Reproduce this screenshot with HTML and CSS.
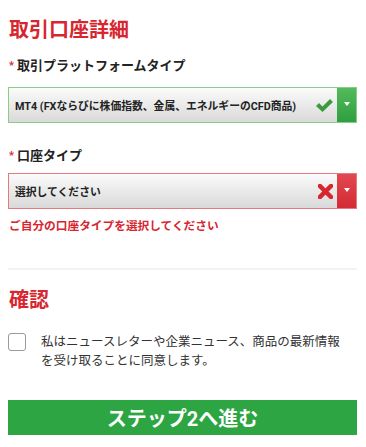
FILE: index.html
```html
<!DOCTYPE html>
<html lang="ja">
<head>
  <meta charset="UTF-8" />
  <meta name="viewport" content="width=device-width, initial-scale=1.0" />
  <title>取引口座詳細</title>
  <link rel="stylesheet" href="styles.css">
</head>
<body>
  <form class="form">
    <h2 class="section-title">取引口座詳細</h2>

    <div class="field">
      <label class="field-label"><span class="req">*</span>取引プラットフォームタイプ</label>
      <div class="select valid">
        <span class="select-value">MT4 (FXならびに株価指数、金属、エネルギーのCFD商品)</span>
        <span class="status">
          <svg width="18" height="16" viewBox="0 0 18 16"><path d="M1 9 L4 6 L7.5 9.5 L15 2 L18 5 L7.5 15 Z" fill="#3c9b3e"/></svg>
        </span>
        <span class="arrow"></span>
      </div>
    </div>

    <div class="field field-second">
      <label class="field-label"><span class="req">*</span>口座タイプ</label>
      <div class="select invalid">
        <span class="select-value">選択してください</span>
        <span class="status">
          <svg width="15" height="15" viewBox="0 0 15 15"><path d="M2 2 L13 13 M13 2 L2 13" stroke="#d9262e" stroke-width="4.5" stroke-linecap="square"/></svg>
        </span>
        <span class="arrow"></span>
      </div>
      <p class="error">ご自分の口座タイプを選択してください</p>
    </div>

    <hr class="divider">

    <h2 class="section-title">確認</h2>

    <label class="consent">
      <span class="checkbox"></span>
      <span class="consent-text">私はニュースレターや企業ニュース、商品の最新情報を受け取ることに同意します。</span>
    </label>

    <button type="button" class="next-btn">ステップ2へ進む</button>
  </form>
</body>
</html>
```

FILE: styles.css
```css
* {
  box-sizing: border-box;
}
body {
  margin: 0;
  padding: 0 9px 0 8px;
  font-family: Roboto, "Noto Sans CJK JP", sans-serif;
  background: #fff;
  color: #222;
}
.form {
  display: flex;
  flex-direction: column;
}
.section-title {
  margin: 18px 0 0 1px;
  font-size: 20px;
  line-height: 24px;
  font-weight: bold;
  color: #d7262f;
}
.field {
  margin-top: 15px;
}
.field-second {
  margin-top: 24px;
}
.field-label {
  display: block;
  font-size: 13px;
  line-height: 18px;
  font-weight: bold;
  color: #222;
  margin-left: 1px;
}
.req {
  color: #d7262f;
  font-size: 11px;
  margin-right: 3px;
  vertical-align: top;
}
.select {
  display: flex;
  align-items: stretch;
  height: 36px;
  margin-top: 12px;
  border: 1px solid #8acb8c;
  background: linear-gradient(#fbfbfb, #d9d9d9);
}
.select.invalid {
  border-color: #e27a80;
  margin-top: 8px;
}
.select-value {
  flex: 1;
  display: flex;
  align-items: center;
  padding-left: 6px;
  font-size: 10.8px;
  font-weight: bold;
  color: #222;
  white-space: nowrap;
}
.status {
  display: flex;
  align-items: center;
  padding-right: 4px;
}
.arrow {
  width: 19px;
  position: relative;
  background: linear-gradient(#52bb5c, #2f9f3e);
}
.invalid .arrow {
  background: linear-gradient(#e24850, #d42a33);
}
.arrow::after {
  content: "";
  position: absolute;
  top: 14px;
  left: 7px;
  border-left: 3px solid transparent;
  border-right: 3px solid transparent;
  border-top: 4px solid #fff;
}
.error {
  margin: 9px 0 0 1px;
  font-size: 11.7px;
  line-height: 17px;
  font-weight: bold;
  color: #d7262f;
}
.divider {
  margin: 33px 0 0;
  border: 0;
  height: 2px;
  background: #f3f3f3;
}
.divider + .section-title {
  margin-top: 18px;
}
.consent {
  display: flex;
  align-items: flex-start;
  margin-top: 20px;
  padding-right: 14px;
}
.checkbox {
  flex: none;
  width: 18px;
  height: 18px;
  margin-top: 1px;
  border: 1px solid #9a9a9a;
  border-radius: 3px;
  background: #fff;
}
.consent-text {
  margin-left: 15px;
  font-size: 12.5px;
  line-height: 19px;
  color: #333;
}
.next-btn {
  margin-top: 30px;
  height: 35px;
  border: 0;
  background: #2da543;
  color: #fff;
  font-family: inherit;
  font-size: 20px;
  font-weight: bold;
  padding: 0;
}
```
